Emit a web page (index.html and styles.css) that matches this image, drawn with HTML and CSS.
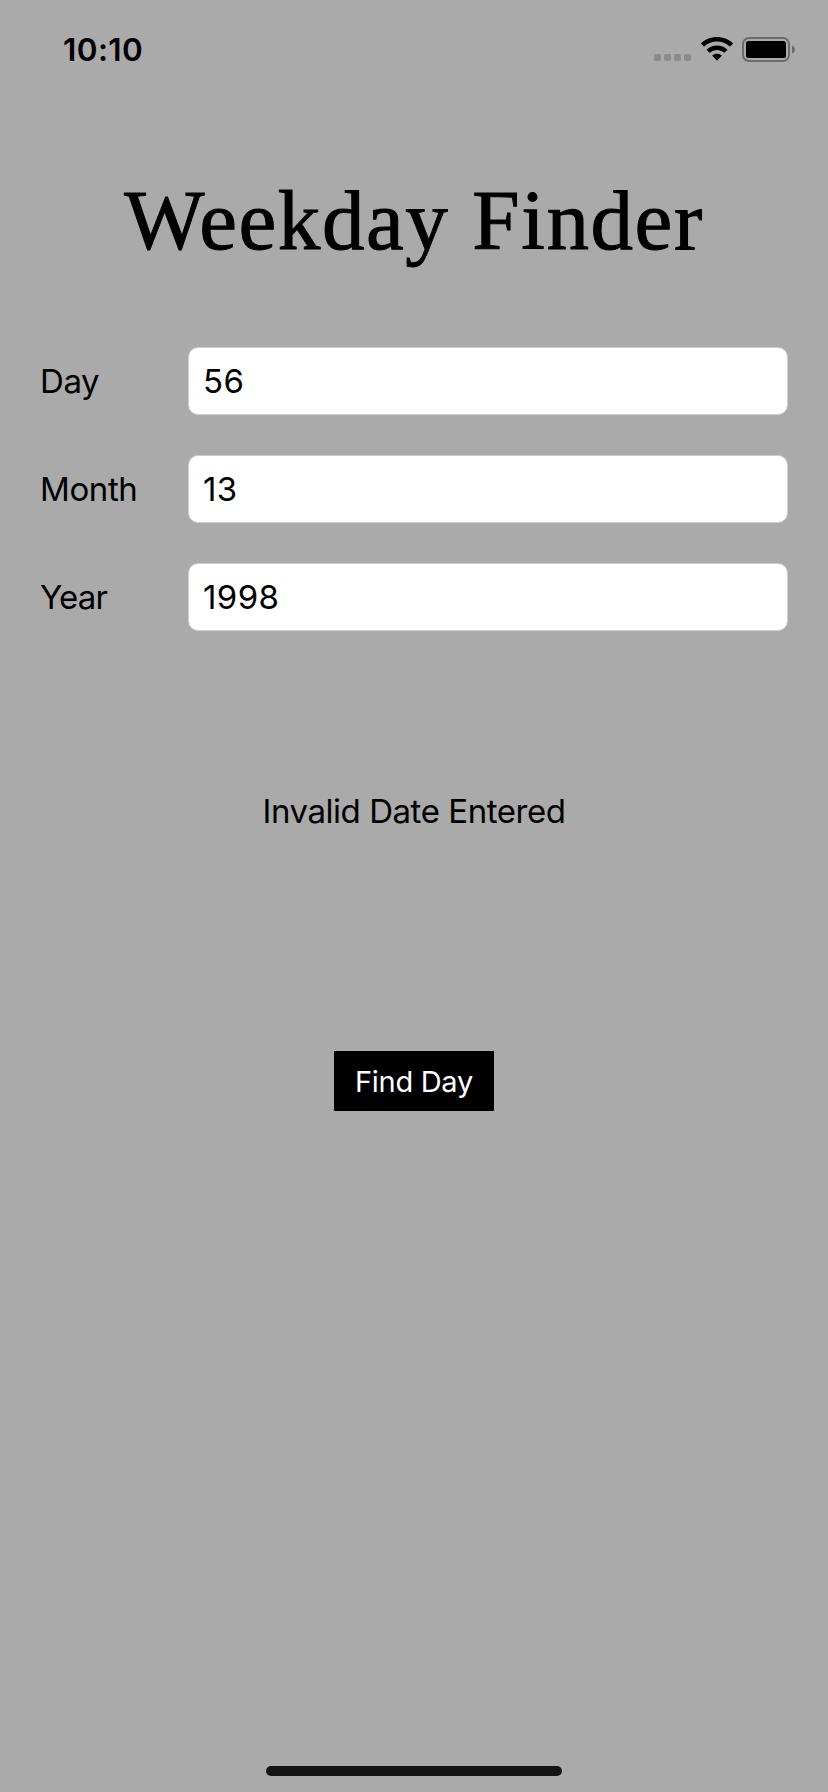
FILE: index.html
```html
<!DOCTYPE html>
<html lang="en">
<head>
<meta charset="utf-8">
<title>Weekday Finder</title>
<link rel="stylesheet" href="styles.css">
</head>
<body>
<div class="screen">
  <header class="status">
    <span class="time">10:10</span>
    <div class="indicators">
      <svg class="signal" width="37" height="7" fill="#8b8b8b"><rect width="7" height="7" rx="1.8"/><rect x="10" width="7" height="7" rx="1.8"/><rect x="20" width="7" height="7" rx="1.8"/><rect x="30" width="7" height="7" rx="1.8"/></svg>
      <svg class="wifi" width="32" height="24" viewBox="0 0 32 24"><path d="M16 0C9.900 0 4.300 2.300.3 6.100Q-.1 6.500.3 6.900L2.700 9.300Q3.100 9.700 3.500 9.300C6.800 6.200 11.200 4.600 16 4.600S25.200 6.200 28.500 9.300Q28.900 9.700 29.300 9.300L31.700 6.900Q32.100 6.500 31.700 6.100C27.700 2.300 22.100 0 16 0ZM16 8.500C12.100 8.500 8.500 10 5.900 12.400Q5.500 12.800 5.900 13.200L8.400 15.600Q8.800 16 9.200 15.600C11 14 13.400 13.100 16 13.100S21 14 22.800 15.600Q23.200 16 23.600 15.600L26.100 13.200Q26.500 12.800 26.100 12.400C23.500 10 19.900 8.500 16 8.500ZM16 16.700C14.200 16.700 12.700 17.300 11.500 18.300Q11.100 18.700 11.500 19.100L15.600 23.200Q16 23.600 16.400 23.200L20.500 19.100Q20.900 18.700 20.500 18.300C19.300 17.300 17.800 16.700 16 16.700Z"/></svg>
      <svg class="battery" width="54" height="26"><rect x="1" y="1" width="46" height="23" rx="6" fill="none" stroke="#6c6c6c" stroke-width="2"/><rect x="4" y="4" width="40" height="17" rx="2.500"/><path d="M50 8.500Q53 9.700 53 12.500T50 16.500Z" fill="#6c6c6c"/></svg>
    </div>
  </header>
  <h1 class="title">Weekday Finder</h1>
  <form class="form">
    <label class="row"><span class="label">Day</span><input class="field" type="text" value="56"></label>
    <label class="row"><span class="label">Month</span><input class="field" type="text" value="13"></label>
    <label class="row"><span class="label year">Year</span><input class="field" type="text" value="1998"></label>
    <output class="message">Invalid Date Entered</output>
    <button class="submit" type="button">Find Day</button>
  </form>
  <div class="home"></div>
</div>
</body>
</html>
```
FILE: styles.css
```css
* { box-sizing: border-box; }
body { margin: 0; background: #aaa; color: #000; font: 33px/40px Inter, sans-serif; }
.screen { width: 828px; height: 1792px; display: flex; flex-direction: column; overflow: hidden; }
.status { height: 98px; padding: 29px 32px 0 63px; display: flex; justify-content: space-between; align-items: flex-start; }
.time { font-size: 31.5px; font-weight: 600; letter-spacing: .4px; line-height: 41px; }
.indicators { display: flex; padding-top: 8px; }
.signal { margin: 17px 10px 0 0; }
.wifi { margin-right: 9px; }
.title { margin: 72px 0 0; height: 100px; font: 400 85px/100px "Liberation Serif", serif; letter-spacing: 1.6px; -webkit-text-stroke: 1px #000; text-align: center; white-space: nowrap; }
.form { display: flex; flex-direction: column; padding: 77px 40px 0; }
.row { display: flex; align-items: center; height: 68px; margin-bottom: 40px; }
.label { width: 148px; letter-spacing: -.4px; }
.year { letter-spacing: -.8px; }
.field { flex: 1; min-width: 0; height: 68px; padding: 0 14px; border: 1px solid #cdcdcd; border-radius: 10px; background: #fff; color: #000; font: inherit; letter-spacing: .4px; outline: 0; }
.message { text-align: center; margin-top: 120px; letter-spacing: -.45px; }
.submit { align-self: center; width: 160px; height: 60px; margin-top: 220px; padding: 1px 0 0; border: 0; background: #000; color: #fff; font: 29px/60px Inter, sans-serif; letter-spacing: -.3px; }
.home { width: 296px; height: 10px; margin: auto auto 16px; border-radius: 5px; background: #141414; }
```
